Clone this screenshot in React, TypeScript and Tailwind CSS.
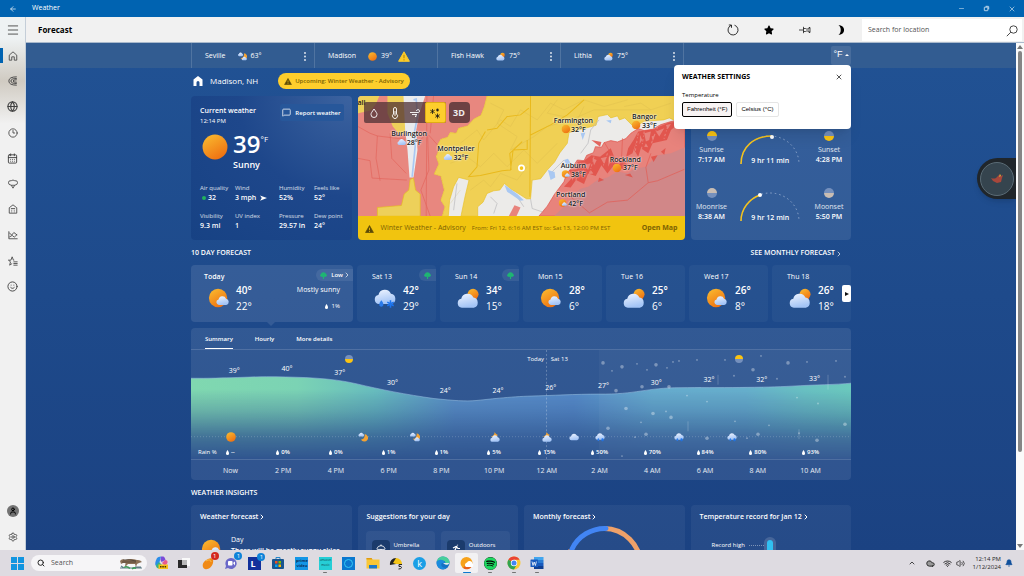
import { clsx } from "clsx";
import {
  ArrowLeft,
  Bell,
  CalendarDays,
  ChevronRight,
  ChevronUp,
  Clock3,
  Cloud,
  Globe,
  Menu,
  MessageSquare,
  Minus,
  Search,
  Settings,
  Smile,
  Umbrella,
  User,
  Volume2,
  Wifi,
  X,
} from "lucide-react";
import { useId, useState, type ReactNode } from "react";
import { FaSpotify, FaStar } from "react-icons/fa";

type Kind =
  | "sun"
  | "sunCloud"
  | "cloudSun"
  | "cloud"
  | "snow"
  | "rainSnow"
  | "moonCloud"
  | "moonClouds"
  | "cloudMoon";

const CLOUD =
  "M6 20a4.6 4.6 0 0 1-.6-9.1A6.6 6.6 0 0 1 18 9.6 5.3 5.3 0 0 1 18.4 20Z";

const WeatherIcon = ({ kind, className }: { kind: Kind; className?: string }) => {
  const id = useId();
  const sun = `url(#${id}s)`;
  const cloud = `url(#${id}c)`;

  return (
    <svg viewBox="0 0 24 24" className={clsx("shrink-0", className)}>
      <defs>
        <linearGradient id={`${id}s`} x1="0.2" y1="0" x2="0.8" y2="1">
          <stop offset="0" stopColor="#f9b82e" />
          <stop offset="1" stopColor="#ee6c10" />
        </linearGradient>
        <linearGradient id={`${id}c`} x1="0" y1="0" x2="0.3" y2="1">
          <stop offset="0" stopColor="#f0f5ff" />
          <stop offset="1" stopColor="#a3c4f6" />
        </linearGradient>
      </defs>
      {kind === "sun" && <circle cx="12" cy="12" r="11.5" fill={sun} />}
      {kind === "sunCloud" && (
        <>
          <circle cx="11" cy="12" r="10" fill={sun} />
          <path d={CLOUD} transform="translate(8 6.5) scale(.65)" fill={cloud} />
        </>
      )}
      {kind === "cloudSun" && (
        <>
          <circle cx="17.5" cy="8" r="6" fill={sun} />
          <path d={CLOUD} transform="translate(-1 1.5) scale(1.05)" fill={cloud} />
        </>
      )}
      {kind === "cloud" && <path d={CLOUD} transform="translate(-1 -2) scale(1.1)" fill={cloud} />}
      {(kind === "snow" || kind === "rainSnow") && (
        <>
          <path d={CLOUD} transform="translate(-1 -3) scale(1.08)" fill={cloud} />
          <path d="M8 14.500c-3 3.500-3 7 0 7s3-3.500 0-7Z" fill="#2b7bea" />
          <path
            d="M18 14.500v8M14.500 16.500l7 4M21.500 16.500l-7 4"
            stroke="#1d74ee"
            strokeWidth="1.7"
          />
        </>
      )}
      {kind === "moonCloud" && (
        <>
          <path d="M16 5a9 9 0 1 1-9 13c6 1 10-5 9-13Z" fill="#f3a233" />
          <path d={CLOUD} transform="translate(0 -2) scale(.65)" fill={cloud} />
        </>
      )}
      {kind === "moonClouds" && (
        <>
          <path d="M16 3a9 9 0 1 1-9 13c6 1 10-5 9-13Z" fill="#f3a233" />
          <path d={CLOUD} transform="translate(-1 -2) scale(.65)" fill={cloud} />
          <path d={CLOUD} transform="translate(9 9) scale(.65)" fill={cloud} />
        </>
      )}
      {kind === "cloudMoon" && (
        <>
          <path d="M11 0c2 4 5 6 8 7l-7 6-10-2c6-1 9-5 9-11Z" fill="#f3a233" />
          <path d={CLOUD} transform="translate(-1 2) scale(1.08)" fill={cloud} />
        </>
      )}
    </svg>
  );
};

const HalfDisc = ({
  top,
  bottom,
  className,
}: {
  top: string;
  bottom: string;
  className: string;
}) => (
  <svg viewBox="0 0 10 10" className={className}>
    <path d="M0 5a5 5 0 0 1 10 0Z" fill={top} />
    <path d="M0 5a5 5 0 0 0 10 0Z" fill={bottom} />
  </svg>
);

const Drop = () => (
  <svg viewBox="0 0 6 10" className="h-[5px] w-[3px] shrink-0" fill="currentColor">
    <path d="M3 0C5 3 6 5 6 7a3 3 0 0 1-6 0C0 5 1 3 3 0Z" />
  </svg>
);

const Clover = () => (
  <svg viewBox="0 0 12 12" className="size-[7px]" fill="#1fb573">
    <circle cx="6" cy="4.500" r="4.200" />
    <circle cx="3.200" cy="5.500" r="2.800" />
    <circle cx="8.800" cy="5.500" r="2.800" />
    <path d="M5 8h2v4H5Z" />
  </svg>
);

const Warning = ({ className, mark = "#f2c40f" }: { className?: string; mark?: string }) => (
  <svg viewBox="0 0 12 11" className={className}>
    <path d="M6 .8 11.400 10.300H.6Z" fill="currentColor" stroke="currentColor" strokeLinejoin="round" />
    <path d="M6 3.800v3.400M6 8.200v1.300" stroke={mark} strokeWidth="1.100" />
  </svg>
);

const DotsVertical = () => (
  <svg viewBox="0 0 2 9" className="h-[9px] w-0.5" fill="currentColor" opacity=".9">
    <circle cx="1" cy="1" r=".9" />
    <circle cx="1" cy="4.500" r=".9" />
    <circle cx="1" cy="8" r=".9" />
  </svg>
);

const TitleBar = () => (
  <div className="flex h-[17px] shrink-0 items-center bg-[#0063b1] text-white">
    <button aria-label="Back" className="flex w-[25px] justify-center">
      <ArrowLeft className="size-2" strokeWidth={2} />
    </button>
    <span className="ml-[7px]">Weather</span>
    <div className="ml-auto flex text-white/80">
      <button aria-label="Minimize" className="flex w-[25px] items-center justify-center">
        <Minus className="size-[7px]" />
      </button>
      <button aria-label="Restore" className="flex w-[25px] items-center justify-center">
        <svg viewBox="0 0 8 8" className="size-[7px]" fill="none" stroke="currentColor">
          <rect x="1.500" y="2.500" width="4" height="4" rx=".5" />
          <path d="M3 1.500h3q.5 0 .5.5v3" />
        </svg>
      </button>
      <button aria-label="Close" className="flex w-[25px] items-center justify-center">
        <X className="size-2" strokeWidth={2} />
      </button>
    </div>
  </div>
);

const Stroke = ({ children }: { children: ReactNode }) => (
  <svg
    viewBox="0 0 24 24"
    className="size-[10px]"
    fill="none"
    stroke="currentColor"
    strokeWidth="2"
    strokeLinejoin="round"
  >
    {children}
  </svg>
);

const navItems = [
  {
    label: "Forecast",
    icon: (
      <Stroke>
        <path d="M3 10 12 2l9 8v12h-6v-8H9v8H3Z" />
      </Stroke>
    ),
  },
  {
    label: "Maps",
    icon: (
      <Stroke>
        <path d="M21 2Q2 2 2 12t19 10M21 6Q7 6 7 12t14 6M21 9q-9 0-9 3t9 3" strokeWidth="2.200" />
      </Stroke>
    ),
  },
  { label: "3D Maps", icon: <Globe className="size-[11px]" strokeWidth={2.5} /> },
  { label: "Hourly Forecast", icon: <Clock3 className="size-[10px]" /> },
  { label: "Monthly Forecast", icon: <CalendarDays className="size-[11px]" /> },
  {
    label: "Pollen",
    icon: (
      <Stroke>
        <path d="M8 4q4-3 8 0 7-1 7 5 0 5-7 6H8q-7-1-7-6 0-6 7-5ZM8 15l4 7 4-7" />
      </Stroke>
    ),
  },
  {
    label: "Life",
    icon: (
      <Stroke>
        <path d="M3 9l9-7 9 7v13H3ZM7 11h10M8 15h2m4 0h2M8 19h2m4 0h2" />
      </Stroke>
    ),
  },
  {
    label: "Historical Weather",
    icon: (
      <Stroke>
        <path d="M2 3v18h21M3 7l6 5 5-6 8 6M3 17l7-4 5 4 7-6" />
      </Stroke>
    ),
  },
  {
    label: "Favorites",
    icon: (
      <Stroke>
        <path d="M15 10h-2L10 2 7 10H1l5 4-2 8 6-4M13 14h10M13 18h10M13 22h10" />
      </Stroke>
    ),
  },
  { label: "Send Feedback", icon: <Smile className="size-[11px]" /> },
];

const Sidebar = () => (
  <aside className="flex w-[26px] shrink-0 flex-col border-r border-[#c4ced8] bg-linear-to-b from-[#eef2f3] from-4% via-[#d0cbc2] via-12% to-[#f1f1f1] to-20% text-neutral-700">
    <button aria-label="Menu" className="flex h-[26px] items-center justify-center">
      <Menu className="size-3.5" strokeWidth={1.5} />
    </button>
    <nav className="grid h-64 auto-rows-fr">
      {navItems.map(({ label, icon }, i) => (
        <a
          key={label}
          href="#"
          aria-label={label}
          className={clsx(
            "relative flex items-center justify-center",
            i === 0 &&
              "before:absolute before:left-0 before:h-[15px] before:w-[3px] before:bg-[#0063b1]",
          )}
        >
          {icon}
        </a>
      ))}
    </nav>
    <div className="mt-auto">
      <button aria-label="Account" className="flex h-[26px] w-full items-center justify-center">
        <span className="flex size-3 items-center justify-center rounded-full bg-neutral-500 text-black">
          <User className="size-2" strokeWidth={3} />
        </span>
      </button>
      <button aria-label="Settings" className="flex h-[26px] w-full items-center justify-center">
        <Settings className="size-[10px]" />
      </button>
    </div>
  </aside>
);

const HeaderBar = () => (
  <header className="flex h-[26px] shrink-0 items-center border-b border-[#a9b9cc] bg-[#f1f1f1] text-black">
    <h1 className="ml-3 text-[8px] font-bold">Forecast</h1>
    <div className="mr-[3px] ml-auto flex">
      <button aria-label="Refresh" className="flex w-9 justify-center">
        <svg viewBox="0 0 12 12" className="size-3" fill="none" stroke="currentColor" strokeWidth=".8">
          <path d="M7.500 1.200a5 5 0 1 1-3.500.2M1.800 1h2.700v2.800" />
        </svg>
      </button>
      <button aria-label="Add to favorites" className="flex w-9 items-center justify-center">
        <FaStar className="size-2.5" />
      </button>
      <button aria-label="Pin" className="flex w-9 items-center justify-center">
        <svg viewBox="0 0 12 8" className="h-2 w-3" fill="none" stroke="currentColor" strokeWidth=".7">
          <path d="M0 4h4.500M4.500 .8v6.400M4.500 2.500h2l1 .5h2.500V1.500h1v5h-1V5h-2.500l-1 .5h-2" />
        </svg>
      </button>
      <button aria-label="Dark mode" className="flex w-9 items-center justify-center">
        <svg viewBox="0 0 6 10" className="h-2.5 w-1.5" fill="currentColor">
          <path d="M.5 0C8 .5 8 9.500.5 10 3.500 7.500 3.500 2.500.5 0Z" />
        </svg>
      </button>
    </div>
    <label className="mr-0.5 flex h-[22px] w-40 items-center bg-white pt-0.5 pr-1 pl-1.5">
      <input
        aria-label="Search for location"
        placeholder="Search for location"
        className="min-w-0 flex-1 outline-none placeholder:text-neutral-600"
      />
      <svg viewBox="0 0 12 12" className="size-3" fill="none" stroke="#333" strokeWidth=".9">
        <circle cx="7.500" cy="4.500" r="3.700" />
        <path d="M4.800 7.200.8 11.200" />
      </svg>
    </label>
  </header>
);

const cities: { name: string; kind: Kind; temp: string; alert?: boolean; menu?: boolean }[] = [
  { name: "Seville", kind: "moonClouds", temp: "63°", menu: true },
  { name: "Madison", kind: "sun", temp: "39°", alert: true },
  { name: "Fish Hawk", kind: "cloudSun", temp: "75°", menu: true },
  { name: "Lithia", kind: "cloudSun", temp: "75°", menu: true },
];

const WeatherSettings = ({ onClose }: { onClose: () => void }) => {
  const [unit, setUnit] = useState("F");

  return (
    <div
      role="dialog"
      aria-label="Weather settings"
      className="absolute top-full right-0 z-20 h-16 w-[177px] rounded bg-white px-2 pt-1.5 text-left text-black shadow-lg"
    >
      <div className="flex items-center justify-between">
        <h2 className="font-bold leading-3">WEATHER SETTINGS</h2>
        <button aria-label="Close settings" onClick={onClose}>
          <X className="size-2" strokeWidth={2} />
        </button>
      </div>
      <p className="mt-[7px] text-[6px] leading-[10px]">Temperature</p>
      <div className="mt-0.5 flex gap-1">
        {[
          ["F", "Fahrenheit (°F)"],
          ["C", "Celsius (°C)"],
        ].map(([key, label]) => (
          <button
            key={key}
            onClick={() => setUnit(key)}
            className={clsx(
              "h-[15px] rounded-xs border px-1 font-[Liberation_Sans,sans-serif] text-[6px]",
              unit === key ? "border-black bg-[#f7f3f3]" : "border-neutral-200",
            )}
          >
            {label}
          </button>
        ))}
      </div>
    </div>
  );
};

const CityStrip = () => {
  const [open, setOpen] = useState(true);

  return (
    <div className="bg-[#325c91]">
      <div className="mx-auto flex h-[25px] w-2/3">
        {cities.map(({ name, kind, temp, alert, menu }) => (
          <div
            key={name}
            className="flex w-[123px] items-center border-l border-white/15 pt-px pr-2 pl-[13px]"
          >
            <a href="#">{name}</a>
            <WeatherIcon kind={kind} className="mr-1 ml-3 size-[9px]" />
            {temp}
            {alert && <Warning mark="#b98a08" className="ml-1.5 h-[11px] w-3 text-[#fbcb2b]" />}
            {menu && (
              <button aria-label={`${name} options`} className="ml-auto">
                <DotsVertical />
              </button>
            )}
          </div>
        ))}
        <div className="flex flex-1 border-l border-white/15">
          <div className="relative ml-auto flex h-[22px] items-center">
            <button
              onClick={() => setOpen(!open)}
              className="mt-0.5 flex h-[19px] w-5 items-center justify-center gap-0.5 rounded-xs bg-white/10 font-[Liberation_Sans,sans-serif] text-[9px]"
            >
              °F
              <svg viewBox="0 0 4 2" className="h-0.5 w-1" fill="currentColor">
                <path d="M2 0 4 2H0Z" />
              </svg>
            </button>
            {open && <WeatherSettings onClose={() => setOpen(false)} />}
          </div>
        </div>
      </div>
    </div>
  );
};

const metrics = [
  { label: "Air quality", value: "32", dot: true },
  { label: "Wind", value: "3 mph", arrow: true },
  { label: "Humidity", value: "52%" },
  { label: "Feels like", value: "52°" },
  { label: "Visibility", value: "9.3 mi" },
  { label: "UV index", value: "1" },
  { label: "Pressure", value: "29.57 in" },
  { label: "Dew point", value: "24°" },
];

const CurrentWeather = () => (
  <section className="rounded bg-radial-[at_100%_0%] from-[#3c63a0] via-[#1e478b] via-50% to-[#174284] pt-2.5 pl-[9px] leading-[10px]">
    <div className="flex items-start justify-between pr-2">
      <div>
        <h2 className="font-semibold">Current weather</h2>
        <p className="text-[6px] leading-[10px]">12:14 PM</p>
      </div>
      <button className="-mt-0.5 flex h-[17px] w-16 items-center justify-center gap-1 rounded-xs bg-[#27579a] text-[6px] font-semibold">
        <MessageSquare className="size-[9px]" />
        Report weather
      </button>
    </div>
    <div className="mt-[3px] flex">
      <WeatherIcon kind="sun" className="mt-[5px] mr-[5px] ml-0.5 size-[26px]" />
      <div>
        <p className="flex items-start text-2xl leading-[30px] font-semibold">
          39<span className="mt-1 text-[8px] leading-3 font-normal">°F</span>
        </p>
        <p className="text-[9px] leading-3 font-semibold">Sunny</p>
      </div>
    </div>
    <dl className="mt-3 grid grid-cols-[35px_44px_35px_auto] gap-y-2">
      {metrics.map(({ label, value, dot, arrow }) => (
        <div key={label} className="whitespace-nowrap">
          <dt className="text-[6px] text-white/80">{label}</dt>
          <dd className="flex items-center font-semibold">
            {dot && <span className="mr-0.5 ml-0.5 size-1 rounded-full bg-[#21b35e]" />}
            {value}
            {arrow && (
              <svg viewBox="0 0 8 6" className="ml-1 h-1.5 w-[7px]" fill="currentColor">
                <path d="M0 0 8 3 0 6 2 3Z" />
              </svg>
            )}
          </dd>
        </div>
      ))}
    </dl>
  </section>
);

// positions are percentages of the map area
const pins: { name: string; kind: Kind; temp: string; x: number; y: number }[] = [
  { name: "Burlington", kind: "cloud", temp: "28°F", x: 15.8, y: 35 },
  { name: "Montpelier", kind: "cloud", temp: "32°F", x: 30.1, y: 47.5 },
  { name: "Farmington", kind: "sun", temp: "32°F", x: 66, y: 24.5 },
  { name: "Bangor", kind: "sun", temp: "33°F", x: 87.7, y: 21 },
  { name: "Rockland", kind: "sun", temp: "37°F", x: 81.9, y: 56.5 },
  { name: "Auburn", kind: "sunCloud", temp: "38°F", x: 66, y: 62 },
  { name: "Portland", kind: "sunCloud", temp: "42°F", x: 65.2, y: 86 },
];

const MapDrawing = () => (
  <svg
    viewBox="24 18 978 360"
    preserveAspectRatio="xMidYMid slice"
    className="absolute inset-0 size-full"
    fill="none"
  >
    <rect x="24" y="18" width="978" height="360" fill="#ecebe9" />
    <path
      d="M24 18H410L402 50 392 76 370 88 352 108 325 115 318 130 300 128 292 142 272 148 262 165 265 182 258 200 266 222 252 252 272 258 282 300 272 330 284 350 276 378H24Z"
      fill="#e8877f"
    />
    <path d="M24 18H88L78 42 62 62 24 70ZM112 18H165L170 60 165 130 150 135 128 110 112 70Z" fill="#edd05a" />
    <path d="M160 18H225L208 70 198 120 202 180 190 262 178 262 172 180 165 120Z" fill="#e9ebee" />
    <path d="M190 30 198 28 202 80 192 130 195 170 186 260" stroke="#a9c8f2" strokeWidth="5" />
    <path
      d="M82 352 154 346 162 312 176 300 180 268 190 264 196 300 210 312V378H82Z"
      fill="#edd05a"
      stroke="#e6bd20"
      strokeWidth="2"
    />
    <path
      d="M410 18H1002V88L968 90 955 84 938 90 880 94 850 112 822 84 806 90 800 78 780 84 770 74 742 80 736 106 655 128 650 160 628 188 612 216 590 240 570 266 545 270 540 326 528 326 500 308 480 296 462 280 448 300 430 302 410 310 398 336 382 350V378H332L344 320 356 270 325 262 310 290 298 330 294 378H276L284 350 272 330 282 300 272 258 252 252 266 222 258 200 265 182 262 165 272 148 292 142 300 128 318 130 325 115 352 108 370 88 392 76 402 50Z"
      fill="#f0d054"
      stroke="#e9c12c"
      strokeWidth="2"
    />
    <path
      d="M1002 86 960 95 930 104 905 118 880 122 862 116 840 130 825 146 800 156 780 152 760 158 752 172 734 170 728 188 708 196 700 212 680 210 668 228 648 250 640 275 612 312 590 348 565 378H1002Z"
      fill="#e8837c"
      stroke="#e04f47"
      strokeWidth="2"
    />
    <path
      d="M1002 172 960 190 920 196 885 230 850 236 830 250 800 244 770 262 740 270 712 290 690 296 668 312 650 340 610 378H1002Z"
      fill="#d18788"
    />
    <path d="M475 378 492 345 510 352 498 378Z" fill="#e8837c" />
    <g stroke="#c2a447" strokeWidth="1.500" opacity=".35">
      <path d="M330 160 380 120 400 150 450 90 480 110 510 60 560 90 600 40 640 60 700 30 760 50 830 30" />
      <path d="M300 220 350 200 390 230 430 190 470 230 520 180 560 220 620 160" />
      <path d="M420 40 460 60 440 100 500 140 480 180 550 140 590 110 660 90 730 60 900 60" />
      <path d="M360 300 400 270 420 290 450 250 500 270 530 230M300 340 330 300" />
      <path d="M620 30 590 70 640 80M820 50 870 40 900 60 960 40M700 50 680 90" />
    </g>
    <g stroke="#e9b91c" strokeWidth="3">
      <path d="M540 18 538 320M410 120 440 115 470 80 510 75 535 55M405 125 385 160 380 230 355 260 390 256 455 242 480 240 488 180 530 178 530 150M540 135 600 105 650 75 700 30M515 155 478 190 482 240" />
    </g>
    <g stroke="#e2645b" strokeWidth="2">
      <path d="M24 205 60 212 66 264 170 270M82 138 78 205 90 272M82 138 165 148M230 18 228 378M24 110 60 130 82 138M210 150 232 130 236 240 212 300 240 378M250 18 240 130M235 135 262 165M120 130 125 205 168 250" />
    </g>
    <g fill="#e04f47" fillOpacity=".85">
      <path d="M862 125 905 118 955 98 990 95 960 120 948 150 905 160 892 190 870 175 862 200 850 180 858 150 845 190 826 200 832 175 848 150Z" />
      <path d="M680 215 700 212 722 196 748 200 780 175 790 200 812 205 830 225 818 240 792 222 770 250 752 226 735 258 712 250 700 282 676 270 660 292 640 290 665 262 655 240 678 238Z" />
      <path d="M745 262 760 270 742 276ZM822 255 838 250 846 262ZM930 185 944 174 940 194ZM900 200 920 196 908 216ZM722 150 752 156 748 170Z" />
    </g>
    <g fill="#e8837c">
      <path d="M880 130 900 125 895 150 885 155ZM915 125 940 115 925 140ZM700 225 720 220 712 240ZM750 205 768 200 760 222ZM690 245 700 240 695 260Z" />
      <path d="M868 135 874 150 866 162ZM902 140 912 136 906 154ZM945 105 960 102 950 118ZM885 160 892 172 880 170ZM725 205 738 210 730 226ZM775 195 782 210 772 230ZM800 208 808 222 796 218ZM665 250 674 255 664 272ZM720 240 728 250 716 252ZM672 222 684 220 676 234Z" />
    </g>
    <path d="M862 130 850 205M880 125 870 190M920 110 900 165M950 110 935 160M690 220 670 290M730 200 705 290M770 190 745 265M800 205 780 250" stroke="#e8837c" strokeWidth="3" strokeDasharray="7 5 3 8" />
    <path d="M815 145 812 210M760 156 792 210M1000 238 920 272 892 278 885 232M892 278 830 330 770 336 716 368 660 320M900 190 885 232" stroke="#e35b52" strokeWidth="2" />
    <path d="M745 90 720 120 712 160 690 190M540 326 545 355 575 365M420 320 440 340 430 370M320 280 310 360M600 250 640 210M500 320 520 350" stroke="#b9b9bb" strokeWidth="2" />
    <path d="M462 284 500 312 520 330 510 332 470 305ZM592 240 612 246 614 262 600 270ZM766 92 782 90 780 100ZM690 130 704 128 696 150ZM640 210 652 206 660 220 648 224Z" fill="#a9c8f2" />
    <circle cx="513" cy="234" r="8" fill="#f6c51b" stroke="#fff" strokeWidth="5" />
  </svg>
);

const WeatherMap = () => (
  <section className="col-span-2 flex flex-col overflow-hidden rounded">
    <div className="relative flex-1 text-neutral-900">
      <MapDrawing />
      <span className="absolute top-0.5 left-0 font-semibold">all</span>
      {pins.map(({ name, kind, temp, x, y }) => (
        <div
          key={name}
          className="absolute flex -translate-1/2 flex-col items-center text-[7px] leading-2 font-semibold [text-shadow:0_0_2px_white,0_0_2px_white]"
          style={{ left: `${x}%`, top: `${y}%` }}
        >
          {name}
          <span className="flex items-center gap-px">
            <WeatherIcon kind={kind} className="size-[9px]" />
            {temp}
          </span>
        </div>
      ))}
      <div className="absolute top-1.5 left-1.5 flex gap-[3px] text-white/90">
        <div className="flex h-[21px] rounded-xs bg-[#4d3034]/75">
          <button aria-label="Precipitation" className="flex w-[21px] items-center justify-center">
            <svg viewBox="0 0 10 10" className="size-2.5" fill="none" stroke="currentColor">
              <path d="M5 1c2 3 3 4 3 5.500a3 3 0 0 1-6 0C2 5 3 4 5 1Z" />
            </svg>
          </button>
          <button aria-label="Temperature" className="flex w-5 items-center justify-center">
            <svg viewBox="0 0 10 12" className="h-3 w-2.5" fill="none" stroke="currentColor">
              <path d="M3.500 7V2a1.500 1.500 0 0 1 3 0v5a2.500 2.500 0 1 1-3 0ZM5 4v5" />
            </svg>
          </button>
          <button aria-label="Wind" className="flex w-5 items-center justify-center">
            <svg viewBox="0 0 10 10" className="size-2.5" fill="none" stroke="currentColor">
              <path d="M0 4.500h8.500a1.500 1.500 0 1 0-2-1.500M2 6.500h5M5 8.500h1V6.500" />
            </svg>
          </button>
          <button
            aria-label="Severe weather"
            className="flex w-[21px] items-center justify-center rounded-xs border border-[#e0ad14] bg-[#fdce2d] text-neutral-900"
          >
            <svg viewBox="0 0 12 12" className="size-3" fill="none" stroke="currentColor" strokeWidth=".8">
              <path d="M3.500 2v5M1.300 3.200l4.400 2.600M5.700 3.200 1.300 5.800M8.500 6.500v5M6.300 7.700l4.400 2.600M10.700 7.700l-4.400 2.600M8.500 1.500v3M7.200 2.200l2.600 1.600M9.800 2.200 7.200 3.800" />
            </svg>
          </button>
        </div>
        <button className="size-[21px] rounded bg-[#4d3034]/80 text-[9px] font-bold">3D</button>
      </div>
    </div>
    <div className="flex h-6 items-center bg-[#f1c40f] px-[7px] pt-px text-[#7d6303]">
      <Warning className="mr-[7px] h-2 w-[9px] text-[#5c4a08]" />
      <span>Winter Weather - Advisory</span>
      <span className="ml-1.5 text-[6px]">From: Fri 12, 6:16 AM EST to: Sat 13, 12:00 PM EST</span>
      <a href="#" className="ml-auto font-bold">
        Open Map
      </a>
    </div>
  </section>
);

const SunRow = ({
  rise,
  set,
  riseTime,
  setTime,
  duration,
  moon,
}: {
  rise: string;
  set: string;
  riseTime: string;
  setTime: string;
  duration: string;
  moon?: boolean;
}) => (
  <div className="flex items-start justify-between">
    <div className="flex w-8 flex-col items-center whitespace-nowrap">
      <HalfDisc
        top={moon ? "#c9bdb3" : "#fac413"}
        bottom="#7590bd"
        className="mb-1 size-2.5"
      />
      <span className="text-white/85">{rise}</span>
      <span className="font-semibold">{riseTime}</span>
    </div>
    <div className="relative mt-1 flex h-[31px] w-[60px] items-end justify-center">
      <svg viewBox="0 0 60 30" className="absolute inset-x-0 top-0 h-[30px] w-[60px]" fill="none">
        <path d="M1 29a29 28 0 0 1 58 0" stroke="#8fa7cc" strokeWidth="1" strokeDasharray="1.5 3" />
        <path
          d={moon ? "M1 29C1 17 9 7 20 3" : "M1 29C1 12 14 1 32 1"}
          stroke="#f5c31d"
          strokeWidth="1.5"
        />
        <circle cx={moon ? 20 : 32} cy={moon ? 3 : 2} r="2" fill="#fff" />
      </svg>
      <span className="font-semibold">{duration}</span>
    </div>
    <div className="flex w-8 flex-col items-center whitespace-nowrap">
      <HalfDisc
        top="#7590bd"
        bottom={moon ? "#c9bdb3" : "#fac413"}
        className="mb-1 size-2.5"
      />
      <span className="text-white/85">{set}</span>
      <span className="font-semibold">{setTime}</span>
    </div>
  </div>
);

const SunAndMoon = () => (
  <section className="flex flex-col gap-[22px] rounded bg-white/9 pt-[35px] pr-1.5 pl-[5px] leading-[10px]">
    <SunRow rise="Sunrise" riseTime="7:17 AM" set="Sunset" setTime="4:28 PM" duration="9 hr 11 min" />
    <SunRow
      rise="Moonrise"
      riseTime="8:38 AM"
      set="Moonset"
      setTime="5:50 PM"
      duration="9 hr 12 min"
      moon
    />
  </section>
);

const days: { day: string; kind: Kind; high: string; low: string; pollen?: boolean }[] = [
  { day: "Sat 13", kind: "rainSnow", high: "42°", low: "29°", pollen: true },
  { day: "Sun 14", kind: "cloudSun", high: "34°", low: "15°", pollen: true },
  { day: "Mon 15", kind: "sunCloud", high: "28°", low: "6°" },
  { day: "Tue 16", kind: "cloudSun", high: "25°", low: "6°" },
  { day: "Wed 17", kind: "sunCloud", high: "26°", low: "8°" },
  { day: "Thu 18", kind: "cloudSun", high: "26°", low: "18°" },
];

const DailyForecast = () => (
  <div className="relative grid grid-cols-8 gap-1">
    <article className="relative col-span-2 h-[57px] rounded bg-white/10 px-[13px] pt-[7px] after:absolute after:top-full after:left-[76px] after:border-x-4 after:border-t-4 after:border-x-transparent after:border-t-white/10">
      <h3 className="leading-[10px] font-semibold">Today</h3>
      <div className="flex">
        <WeatherIcon kind="sunCloud" className="mt-[5px] mr-1.5 ml-1 size-[22px]" />
        <div className="text-[10px] leading-4">
          <p className="font-semibold">40°</p>
          <p>22°</p>
        </div>
        <div className="ml-auto text-right leading-4">
          <p>Mostly sunny</p>
          <p className="flex items-center justify-end gap-1 text-[6px] leading-4">
            <Drop /> 1%
          </p>
        </div>
      </div>
      <a
        href="#"
        className="absolute top-1 right-0 flex h-3 items-center gap-1 rounded-l-full bg-white/8 pr-0.5 pl-1 text-[6px] font-semibold"
      >
        <Clover /> Low <ChevronRight className="-ml-1 size-2" />
      </a>
    </article>
    {days.map(({ day, kind, high, low, pollen }) => (
      <article key={day} className="relative h-[57px] rounded bg-white/4 pt-[7px] pl-[15px]">
        <h3 className="leading-[10px]">{day}</h3>
        <div className="flex">
          <WeatherIcon kind={kind} className="mt-[5px] mr-[7px] ml-0.5 size-[22px]" />
          <div className="text-[10px] leading-4">
            <p className="font-semibold">{high}</p>
            <p>{low}</p>
          </div>
        </div>
        {pollen && (
          <span className="absolute top-1 right-0 flex h-3 w-[17px] items-center justify-center rounded-l-full bg-white/8">
            <Clover />
          </span>
        )}
      </article>
    ))}
    <button
      aria-label="Next days"
      className="absolute top-5 right-0 flex h-[17px] w-[9px] items-center justify-center rounded-xs bg-white"
    >
      <svg viewBox="0 0 4 4" className="size-1">
        <path d="M0 0 4 2 0 4Z" fill="#111" />
      </svg>
    </button>
  </div>
);

// y is the distance of the label from the top of the plot
const hours = [
  { time: "Now", temp: "39°", y: 16, rain: "--" },
  { time: "2 PM", temp: "40°", y: 14, rain: "0%" },
  { time: "4 PM", temp: "37°", y: 18, rain: "0%" },
  { time: "6 PM", temp: "30°", y: 28, rain: "1%" },
  { time: "8 PM", temp: "24°", y: 36, rain: "1%" },
  { time: "10 PM", temp: "24°", y: 36, rain: "5%" },
  { time: "12 AM", temp: "26°", y: 33, rain: "15%" },
  { time: "2 AM", temp: "27°", y: 31, rain: "50%" },
  { time: "4 AM", temp: "30°", y: 28, rain: "70%" },
  { time: "6 AM", temp: "32°", y: 25, rain: "84%" },
  { time: "8 AM", temp: "32°", y: 25, rain: "80%" },
  { time: "10 AM", temp: "33°", y: 24, rain: "93%" },
];

const marks: { kind: Kind; x: number }[] = [
  { kind: "sun", x: 6 },
  { kind: "moonCloud", x: 26 },
  { kind: "moonClouds", x: 34 },
  { kind: "cloudMoon", x: 46 },
  { kind: "cloudMoon", x: 54 },
  { kind: "cloud", x: 58 },
  { kind: "snow", x: 62 },
  { kind: "snow", x: 74 },
  { kind: "snow", x: 82 },
];

const flakes = [
  [412, 13, 2], [431, 17, 2], [421, 21, 1], [465, 15, 2], [446, 14, 1], [456, 20, 1], [476, 18, 1],
  [482, 12, 1], [488, 11, 1], [506, 10, 1], [534, 10, 1], [570, 6, 1], [562, 20, 2], [543, 26, 1],
  [597, 13, 2], [616, 12, 1], [645, 11, 1], [654, 27, 1], [425, 41, 2], [451, 37, 2], [478, 37, 2],
  [435, 59, 2], [462, 64, 2], [475, 62, 1], [480, 68, 2], [450, 73, 1], [417, 79, 2],
  [455, 85, 2], [444, 88, 1], [516, 52, 1], [496, 46, 1], [544, 72, 1], [578, 76, 1], [516, 89, 2],
  [556, 89, 1], [606, 48, 1], [627, 54, 1], [654, 75, 2], [626, 91, 2], [586, 29, 1],
  [567, 85, 2], [608, 84, 1], [431, 107, 1],
];

const CURVE =
  "M0 28.500C35 29 60 26.500 85 27S140 28 165 34 215 45 243 49C262 51 275 52 285 51S320 47 340 46.500 385 44.500 408 44.500C445 45 455 38 490 38S575 38 600 36.500 645 35 660 33.500";

const TemperaturePlot = () => (
  <svg
    viewBox="0 0 660 110"
    preserveAspectRatio="none"
    className="absolute inset-0 size-full"
    fill="none"
  >
    <defs>
      <linearGradient id="heat">
        <stop offset="0" stopColor="#80d8b0" />
        <stop offset=".16" stopColor="#7bd3b4" />
        <stop offset=".28" stopColor="#68bdbe" />
        <stop offset=".4" stopColor="#5b90c8" />
        <stop offset=".58" stopColor="#568ac8" />
        <stop offset=".7" stopColor="#62aacd" />
        <stop offset=".84" stopColor="#62adcb" />
        <stop offset=".93" stopColor="#65bfc0" />
        <stop offset="1" stopColor="#67c8bb" />
      </linearGradient>
      <linearGradient id="fade" x1="0" y1="0" x2="0" y2="1">
        <stop offset=".36" stopColor="#fff" />
        <stop offset=".56" stopColor="#fff" stopOpacity=".7" />
        <stop offset=".8" stopColor="#fff" stopOpacity=".22" />
        <stop offset="1" stopColor="#fff" stopOpacity="0" />
      </linearGradient>
      <mask id="fadeMask" maskUnits="userSpaceOnUse" x="0" y="0" width="660" height="110">
        <rect width="660" height="110" fill="url(#fade)" />
      </mask>
    </defs>
    <path d={`${CURVE}V110H0Z`} fill="url(#heat)" mask="url(#fadeMask)" />
    <path d={CURVE} stroke="#8fb8dc" strokeOpacity=".6" />
    <rect x="408" width="252" height="110" fill="#fff" fillOpacity=".03" />
    <path d="M0 87.500H660" stroke="#fff" strokeOpacity=".2" strokeDasharray="1 2" />
    <path d="M355.500 0V110" stroke="#fff" strokeOpacity=".25" strokeDasharray="2 2" />
    <path d="M527 25v10M637 25v15M497 72v10M608 80v10" stroke="#fff" strokeOpacity=".2" />
    {flakes.map(([x, y, r]) => (
      <circle key={`${x}-${y}`} cx={x} cy={y} r={r * 0.9} fill="#fff" fillOpacity=".35" />
    ))}
  </svg>
);

const HourlyChart = () => (
  <section className="mt-1.5 rounded bg-white/9">
    <div className="flex h-[22px] gap-[22px] border-b border-white/15 px-3.5 font-semibold">
      {["Summary", "Hourly", "More details"].map((tab, i) => (
        <button
          key={tab}
          className={clsx("border-b pt-0.5 text-[6px]", i === 0 ? "border-white" : "border-transparent")}
        >
          {tab}
        </button>
      ))}
    </div>
    <div className="relative flex h-[110px] flex-col border-b border-white/15">
      <TemperaturePlot />
      <HalfDisc
        top="#7590bd"
        bottom="#fac413"
        className="absolute top-[5px] left-[23.3%] size-2"
      />
      <HalfDisc
        top="#fac413"
        bottom="#7590bd"
        className="absolute top-[5px] left-[82.4%] size-2"
      />
      <span className="absolute top-1 right-[46.500%] text-[6px] leading-[10px]">Today</span>
      <span className="absolute top-1 left-[54.500%] text-[6px] leading-[10px]">Sat 13</span>
      {marks.map(({ kind, x }) => (
        <span
          key={x}
          className="absolute top-[82px] -translate-x-1/2"
          style={{ left: `${x}%` }}
        >
          <WeatherIcon kind={kind} className="size-2.5" />
        </span>
      ))}
      <div className="relative grid flex-1 grid-cols-12 pr-2.5 pl-[17px] text-center">
        {hours.map(({ time, temp, y }) => (
          <span key={time} className="leading-[10px]" style={{ paddingTop: y }}>
            {temp}
          </span>
        ))}
      </div>
      <div className="relative grid h-[15px] grid-cols-12 pr-3.5 pl-[13px] text-[6px] leading-4 font-semibold">
        <span className="absolute left-[7px] font-normal">Rain %</span>
        {hours.map(({ time, rain }) => (
          <span key={time} className="flex items-center justify-center gap-0.5">
            <Drop />
            {rain}
          </span>
        ))}
      </div>
    </div>
    <div className="grid h-5 grid-cols-12 items-center pt-0.5 pr-3.5 pl-[13px] text-center text-white/90">
      {hours.map(({ time }) => (
        <span key={time}>{time}</span>
      ))}
    </div>
  </section>
);

const InsightCard = ({
  title,
  link,
  children,
}: {
  title: string;
  link?: boolean;
  children: ReactNode;
}) => (
  <section className="h-36 rounded bg-white/5 px-2 pt-[7px]">
    <h3 className="flex items-center pl-px leading-[10px] font-semibold">
      {title}
      {link && <ChevronRight className="size-2" strokeWidth={3} />}
    </h3>
    {children}
  </section>
);

const Suggestion = ({ icon, label }: { icon: ReactNode; label: string }) => (
  <div className="flex h-16 gap-1 rounded bg-white/5 p-1.5 pt-2">
    <span className="mt-px flex size-[18px] items-center justify-center rounded bg-[#1b3b6c]">
      {icon}
    </span>
    <span className="mt-px text-[6px] leading-[10px]">{label}</span>
  </div>
);

const Insights = () => (
  <div className="grid grid-cols-4 gap-1.5">
    <InsightCard title="Weather forecast" link>
      <div className="mt-3 flex gap-2 pl-0.5">
        <WeatherIcon kind="sunCloud" className="mt-1 size-[22px]" />
        <div className="leading-[11px] whitespace-nowrap">
          <p>Day</p>
          <p className="font-semibold">There will be mostly sunny skies</p>
        </div>
      </div>
    </InsightCard>
    <InsightCard title="Suggestions for your day">
      <div className="mt-[9px] grid grid-cols-2 gap-1.5">
        <Suggestion icon={<Umbrella className="size-2.5" />} label="Umbrella" />
        <Suggestion
          icon={
            <svg
              viewBox="0 0 10 10"
              className="size-2.5"
              fill="none"
              stroke="currentColor"
              strokeWidth="1.200"
            >
              <path d="M6 2 4 6l2 1v3M4 6 2 9M2 4l3-1.500 2 2h2M6.500.8v.6" />
            </svg>
          }
          label="Outdoors"
        />
      </div>
    </InsightCard>
    <InsightCard title="Monthly forecast" link>
      <svg viewBox="0 0 80 80" className="mx-auto mt-[3px] w-20" fill="none" strokeWidth="5">
        <path d="M40 3.500A36.500 36.500 0 0 1 76.500 40" stroke="#efa169" />
        <path d="M76.500 40A36.500 36.500 0 0 1 3.500 40Q3.500 32 7 25" stroke="#efa169" />
        <path d="M8 24A36.500 36.500 0 0 1 42 3.500" stroke="#4285f4" strokeLinecap="round" />
      </svg>
    </InsightCard>
    <InsightCard title="Temperature record for Jan 12" link>
      <div className="mt-[15px] flex items-start pl-[13px] text-[6px]">
        <span className="mt-[3px] leading-[10px]">Record high</span>
        <span className="mt-2 ml-1 w-[15px] border-t border-dotted border-white/40" />
        <span className="h-24 w-3 rounded-full border-[3px] border-white/15 bg-[#31c0f2] bg-clip-padding" />
      </div>
    </InsightCard>
  </div>
);

const Badge = ({ className }: { className: string }) => (
  <span
    className={clsx(
      "absolute -top-1 -right-1 flex size-2 items-center justify-center rounded-full text-[6px] leading-2 text-white",
      className,
    )}
  >
    1
  </span>
);

const apps: { name: string; icon: ReactNode; badge?: string; state?: "open" | "active" }[] = [
  {
    name: "Copilot",
    icon: (
      <svg viewBox="0 0 14 14" className="size-3.5">
        <path d="M3 2q1-1.500 4-1.500L5 8 2 10Q0 8 3 2Z" fill="#2a8de8" />
        <path d="M7 .5h2.500Q11 1 11.500 4l-4 2-1-2Z" fill="#7a4bd8" />
        <path d="M11 4q3 0 2.500 3L11 10 8 7Z" fill="#e85a8f" />
        <path d="M2 9.500 5 6l3 3-3 3.500Q2 12 2 9.500Z" fill="#36b37e" />
        <rect x="4.500" y="8.500" width="9.500" height="4.500" fill="#f7c21a" />
        <path d="M6 10.700h6.500" stroke="#40340a" strokeWidth="1.600" strokeDasharray="1.500 .8" />
      </svg>
    ),
  },
  {
    name: "Task View",
    icon: (
      <svg viewBox="0 0 14 14" className="size-3.5">
        <rect x="5" y="2" width="8" height="8" fill="#fafafa" />
        <path d="M1 4h4v5h5v3H1Z" fill="#2a2a2a" />
        <path d="M5 4h5v5H5Z" fill="#b9b9b9" />
      </svg>
    ),
  },
  {
    name: "Phone",
    badge: "bg-[#d3271f]",
    icon: (
      <svg viewBox="0 0 14 14" className="size-3.5">
        <path d="M7 3c4-2 6 0 5 4s-5 7-8 6-4-7 3-10Z" fill="#f08a16" />
        <path d="M5 5c3-2 5-1 5 1" stroke="#f9c14d" fill="none" />
      </svg>
    ),
  },
  {
    name: "Chat",
    badge: "bg-[#0f83d8]",
    icon: (
      <svg viewBox="0 0 14 14" className="size-3.5">
        <path d="M7 2a5.500 5.500 0 1 1-3 10l-3 1 1-3A5.500 5.500 0 0 1 7 2Z" fill="#6a68c9" />
        <rect x="4" y="5" width="4.500" height="4.500" rx=".8" fill="#fff" />
        <path d="m9 7 2-1.500v4Z" fill="#fff" />
      </svg>
    ),
  },
  {
    name: "LinkedIn",
    badge: "bg-[#0f83d8]",
    icon: (
      <span className="flex size-[13px] items-center bg-[#12309b] pl-0.5 text-[9px] leading-none font-bold text-white">
        L
      </span>
    ),
  },
  {
    name: "Microsoft Store",
    icon: (
      <svg viewBox="0 0 14 14" className="size-3.5">
        <path d="M5 3V1.500h4V3" stroke="#2586c9" fill="none" />
        <rect x="1" y="3" width="12" height="10" rx="1" fill="#19558f" />
        <path d="M4 5h2.500v2.500H4Z" fill="#f25022" />
        <path d="M7.500 5H10v2.500H7.500Z" fill="#7fba00" />
        <path d="M4 8.500h2.500V11H4Z" fill="#00a4ef" />
        <path d="M7.500 8.500H10V11H7.500Z" fill="#ffb900" />
      </svg>
    ),
  },
  {
    name: "Prime Video",
    icon: (
      <span className="flex size-[13px] flex-col items-center justify-center bg-[#1496e6] text-[4px] leading-[5px] font-bold text-[#0c2f5c]">
        <span>prime</span>
        <span>video</span>
      </span>
    ),
  },
  {
    name: "Amazon Music",
    state: "open",
    icon: (
      <span className="flex size-[13px] flex-col items-center justify-center bg-[#26ced6] text-[3px] leading-[5px] text-[#0d4b52]">
        <span>amazon</span>
        <span>music</span>
      </span>
    ),
  },
  {
    name: "Alexa",
    icon: (
      <span className="flex size-[13px] items-center justify-center bg-[#0b78cf]">
        <span className="size-[9px] rounded-full border border-[#35c9f5]" />
      </span>
    ),
  },
  {
    name: "File Explorer",
    icon: (
      <svg viewBox="0 0 14 14" className="size-3.5">
        <path d="M.5 2h5l1 1.500h7v9H.5Z" fill="#f9c736" />
        <path d="M.5 2h5l1 1.500H.5Z" fill="#e09b12" />
        <path d="M3 9h8v3.500H3Z" fill="#1b79cc" />
      </svg>
    ),
  },
  {
    name: "Clock",
    icon: (
      <svg viewBox="0 0 14 14" className="size-3.5">
        <path d="M1 9A6 6 0 0 1 7 2v6Z" fill="#222" />
        <path d="M7 2a6 6 0 0 1 6 6H7Z" fill="#f5c518" />
        <path d="M7 2 4 7l3 1Z" fill="#f5c518" />
        <path d="M13 8.500h-3v2q2.500-.5 2.500 1T9.500 13" stroke="#222" fill="none" />
      </svg>
    ),
  },
  {
    name: "Kindle",
    icon: (
      <span className="flex size-[13px] items-center justify-center rounded-full bg-[#1b9fe6] text-[9px] leading-none text-white">
        k
      </span>
    ),
  },
  {
    name: "Edge",
    icon: (
      <svg viewBox="0 0 14 14" className="size-3.5">
        <circle cx="7" cy="7" r="6.500" fill="#1471c4" />
        <path d="M.8 6C1.500 2 4 .5 7 .5c4 0 6.500 3 6.500 5.500S11 9 9 8.500c1-1 .5-4-2.500-4S1.500 5 .8 6Z" fill="#46cf9c" />
        <path d="M.8 6c1-2 3-2.500 5-2 2 .4 3 1.700 3 3H6C4 9 6 13 11 11.500c-4 4-11 1-10.200-5.500Z" fill="#1a8bdd" />
        <path d="M7 7h6.200q-.4 2-2.400 1.800Q8.500 8.800 7 7Z" fill="#dfe9f3" />
      </svg>
    ),
  },
  {
    name: "Weather",
    state: "active",
    icon: (
      <svg viewBox="0 0 14 14" className="size-3.5">
        <circle cx="6.500" cy="7" r="6" fill="#f7a21b" />
        <path d="M3 12A6 6 0 0 0 12.500 9H6Z" fill="#e8601a" />
        <path d="M6 11a2.500 2.500 0 0 1 1-4.500 3 3 0 0 1 5.500 1A2 2 0 0 1 12 11Z" fill="#fff" />
      </svg>
    ),
  },
  {
    name: "Spotify",
    state: "open",
    icon: (
      <span className="rounded-full bg-black">
        <FaSpotify className="size-[13px] text-[#1ed760]" />
      </span>
    ),
  },
  {
    name: "Chrome",
    state: "open",
    icon: (
      <svg viewBox="0 0 14 14" className="size-3.5">
        <circle cx="7" cy="7" r="6.500" fill="#fcc934" />
        <path d="M7 7 1.400 3.700A6.500 6.500 0 0 1 12.600 3.700H7Z" fill="#ea4335" />
        <path d="M7 7 1.400 3.700A6.500 6.500 0 0 0 7 13.500L9.800 8.600Z" fill="#2fa350" />
        <circle cx="7" cy="7" r="3.200" fill="#fff" />
        <circle cx="7" cy="7" r="2.500" fill="#4285f4" />
      </svg>
    ),
  },
  {
    name: "Word",
    state: "open",
    icon: (
      <svg viewBox="0 0 14 14" className="size-3.5">
        <path d="M4 1h9.500v3H4Z" fill="#41a5ee" />
        <path d="M4 4h9.500v3H4Z" fill="#2b7cd3" />
        <path d="M4 7h9.500v3H4Z" fill="#185abd" />
        <path d="M4 10h9.500v3H4Z" fill="#103f91" />
        <rect x=".5" y="3.500" width="7.500" height="7.500" rx=".6" fill="#185abd" />
        <path d="m2 5.500 1 4 1.200-3.500 1.200 3.500 1-4" stroke="#fff" fill="none" strokeWidth=".8" />
      </svg>
    ),
  },
];

const Taskbar = () => (
  <footer className="flex h-[26px] shrink-0 items-center bg-[#dedbe1] text-neutral-800">
    <button aria-label="Start" className="mr-[7px] ml-[11px]">
      <svg viewBox="0 0 13 13" className="size-[13px]" fill="#1295e0">
        <path d="M0 0h6v6H0ZM7 0h6v6H7ZM0 7h6v6H0ZM7 7h6v6H7Z" />
      </svg>
    </button>
    <label className="mr-0.5 flex h-4 w-[116px] items-center rounded-full bg-[#f6f5f7] pr-1 pl-1.5">
      <Search className="mr-1.5 size-2" strokeWidth={3} />
      <input
        aria-label="Search"
        placeholder="Search"
        className="min-w-0 flex-1 outline-none placeholder:text-neutral-600"
      />
      <svg viewBox="0 0 24 13" className="h-[13px] w-6" fill="none">
        <path d="M1 4q2-3 5-1 6-2 12 0 3-.5 5 2l-3 1-2 1-1 3-1-3H9l-3 3 .5-4L4 6 2 7Z" fill="#8a6f55" />
        <path d="M4 3q6-1 13 1M3 5h14" stroke="#3f352c" strokeWidth=".7" />
        <path d="M1 11h22M2 9l3 2M16 10h6" stroke="#5f7d86" strokeWidth="1.200" />
        <path d="M5 10.500q3-2 6 1M13 12q2-2 4-.5" stroke="#3e9a5a" strokeWidth="1.500" />
      </svg>
    </label>
    <nav className="grid w-100 auto-cols-fr grid-flow-col">
      {apps.map(({ name, icon, badge, state }) => (
        <button
          key={name}
          aria-label={name}
          className={clsx(
            "relative flex h-5 items-center justify-center rounded-xs after:absolute after:bottom-0 after:h-px after:rounded-full",
            state === "active" && "bg-white/60 after:w-2 after:bg-[#0b78cf]",
            state === "open" && "after:w-1 after:bg-neutral-500",
          )}
        >
          <span className="relative flex">
            {icon}
            {badge && <Badge className={badge} />}
          </span>
        </button>
      ))}
    </nav>
    <div className="ml-auto flex items-center pr-[11px]">
      <ChevronUp className="mr-2.5 size-2" strokeWidth={2.5} />
      <Cloud className="mr-2 size-[9px]" fill="#999" strokeWidth={2.5} />
      <Wifi className="mr-1 size-[9px]" strokeWidth={2.5} />
      <Volume2 className="mr-2 size-[9px]" />
      <p className="text-right text-[6px] leading-2">
        12:14 PM
        <br />
        1/12/2024
      </p>
      <Bell className="ml-1 size-2 text-[#10509c]" fill="#10509c" />
    </div>
  </footer>
);

const Scrollbar = () => (
  <div aria-hidden className="flex w-2 shrink-0 flex-col items-center justify-between bg-[#fafafa] py-0.5">
    <svg viewBox="0 0 6 4" className="h-1 w-1.5" fill="#777">
      <path d="M3 0 6 4H0Z" />
    </svg>
    <span className="my-0.5 mb-[92px] w-1 flex-1 rounded-full bg-[#858585]" />
    <svg viewBox="0 0 6 4" className="h-1 w-1.5" fill="#777">
      <path d="M3 4 6 0H0Z" />
    </svg>
  </div>
);

const sectionHeading = "flex h-[25px] items-center justify-between pt-0.5 font-semibold";

export default function App() {
  return (
    <div className="flex h-screen flex-col overflow-hidden font-[Open_Sans,sans-serif] text-[7px]">
      <TitleBar />
      <div className="flex min-h-0 flex-1">
        <Sidebar />
        <div className="flex min-w-0 flex-1 flex-col">
          <HeaderBar />
          <div className="flex min-h-0 flex-1">
            <main className="relative min-w-0 flex-1 overflow-hidden bg-linear-to-b from-[#215294] to-[#1b4282] text-white">
              <CityStrip />
              <div className="mx-auto w-2/3">
                <div className="flex h-7 items-center pb-0.5">
                  <svg viewBox="0 0 10 10" className="ml-0.5 size-2.5" fill="currentColor">
                    <path d="M5 0 9.500 3.500V10H6.500V6.500a1.500 1.500 0 0 0-3 0V10H.5V3.500Z" />
                  </svg>
                  <span className="ml-[7px] text-[8px]">Madison, NH</span>
                  <a
                    href="#"
                    className="ml-5 flex h-4 items-center gap-[3px] rounded-full bg-[#fece2c] px-1.5 text-[6px] font-semibold text-[#7d6303]"
                  >
                    <Warning className="h-[7px] w-2 text-[#5c4a08]" />
                    <span>Upcoming: Winter Weather - Advisory</span>
                  </a>
                </div>
                <div className="grid min-h-36 grid-cols-4 gap-1.5">
                  <CurrentWeather />
                  <WeatherMap />
                  <SunAndMoon />
                </div>
                <div className={sectionHeading}>
                  <h2>10 DAY FORECAST</h2>
                  <a href="#" className="mr-2 flex items-center">
                    SEE MONTHLY FORECAST <ChevronRight className="size-2" />
                  </a>
                </div>
                <DailyForecast />
                <HourlyChart />
                <div className={sectionHeading}>
                  <h2>WEATHER INSIGHTS</h2>
                </div>
                <Insights />
              </div>
              <div className="absolute top-[115px] right-0 flex h-[41px] w-[39px] items-center rounded-l-full bg-[#20262b] pl-[3px] shadow-md">
                <span className="flex size-[34px] items-center justify-center rounded-full border border-[#5a6b75] bg-[#35444e]">
                  <svg viewBox="0 0 12 10" className="h-2.5 w-3">
                    <path d="M0 4q3 1 5 0l4-4 1 2 2-1-1 3-1 4-4 1-4-2Z" fill="#a8473b" />
                    <path d="m9 0 1 2-2 1Z" fill="#d6b23a" />
                  </svg>
                </span>
              </div>
            </main>
            <Scrollbar />
          </div>
        </div>
      </div>
      <Taskbar />
    </div>
  );
}
